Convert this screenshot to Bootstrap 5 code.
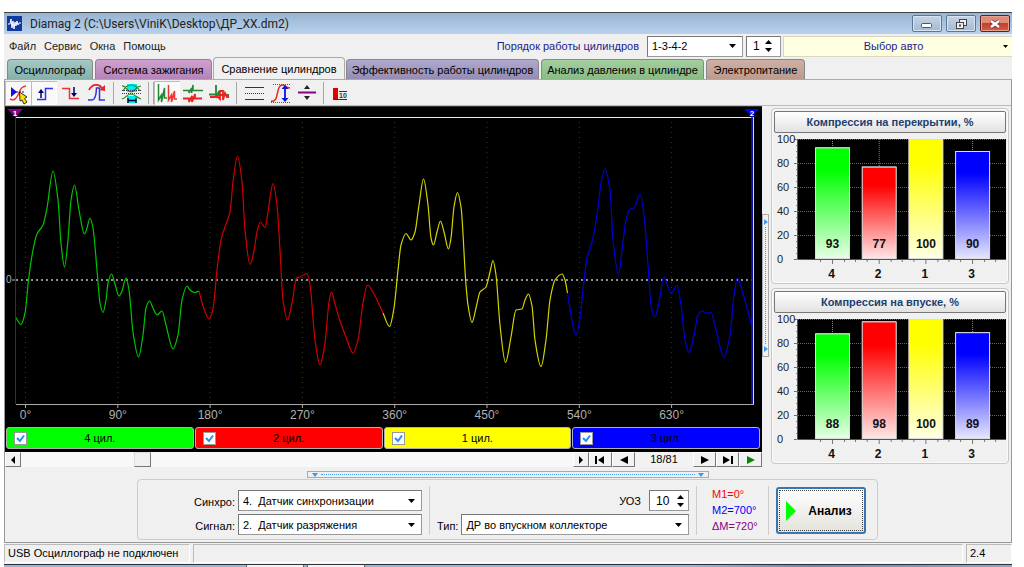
<!DOCTYPE html>
<html lang="ru">
<head>
<meta charset="utf-8">
<meta name="viewport" content="width=device-width, initial-scale=1">
<title>Diamag 2</title>
<link href="https://cdn.jsdelivr.net/npm/bootstrap@5.3.0/dist/css/bootstrap.min.css" rel="stylesheet">
<style>
body{font:11px/14px "Liberation Sans",Arial,sans-serif;color:#000;background:#fff;padding:12px 12px 0 4px}
button,input,select{font:inherit;color:inherit}
.app{background:#f0f0f0}
.titlebar{height:22px;border-top:1px solid #444;background:linear-gradient(#98b4d2,#b9d1ec);font:12px/20px Roboto,sans-serif;color:#222;padding:0 2px 0 3px}
.winbtn{width:30px;height:17px;border:1px solid #5d7893;border-radius:2px;background:linear-gradient(#c3d4e8,#a2bad5);box-shadow:inset 0 0 0 1px #d8e4f2;padding:0}
.winbtn.close-x{background:linear-gradient(#e08a78 45%,#c2402a 50%,#d0604a);border-color:#5b2222;box-shadow:inset 0 0 0 1px #e8a090}
.menurow{height:23px;padding:1px 0 0 5px}
.menurow nav{gap:8px}
.menurow nav a{color:#222;text-decoration:none}
.field{background:#fff;border:1px solid #999;border-top-color:#777;border-left-color:#777;height:21px;border-radius:0}
.drop{appearance:none;padding:0 24px 0 4px;background:#fff url("data:image/svg+xml,%3Csvg xmlns='http://www.w3.org/2000/svg' width='7' height='4'%3E%3Cpath d='M0 0H7L3.500 4Z'/%3E%3C/svg%3E") no-repeat right 6px center}
.spin{width:35px;font-size:12px}
.spin input{border:0;background:transparent;width:20px;min-width:0;padding:0 0 0 6px;outline:0}
.spin button{border:0;background:none;padding:0;line-height:0;display:block}
.order-label{color:#1c1c8c}
.order-select{width:96px;margin-right:3px}
.car{width:229px;height:21px;margin-left:2px;border:1px solid #d8d8c0;border-right:0;background:#ffffe1;color:#1c1c8c;padding:0 4px 0 0}
.tabs{gap:2px;padding-left:3px;height:22px;line-height:18px}
.tabs button{height:20px;border:1px solid #888;border-bottom:0;border-radius:4px 4px 0 0;padding:0;white-space:nowrap}
.tabs .t1{background:linear-gradient(#a5c9c5,#86b0ab);flex:0 0 86px}
.tabs .t2{background:linear-gradient(#cfa0d0,#b384b5);flex:0 0 117px}
.tabs .t3{background:#f0f0f0;flex:0 0 132px;height:22px;line-height:20px;margin:0 -1px;border-color:#aaa}
.tabs .t4{background:linear-gradient(#b0a8ce,#958cb4);flex:0 0 193px}
.tabs .t5{background:linear-gradient(#a4cf9f,#8aba85);flex:0 0 163px}
.tabs .t6{background:linear-gradient(#d0b0a4,#bb9b8e);flex:0 0 99px}
.page{border:1px solid #999;border-top-color:#aaa}
.tools{height:26px;border-bottom:1px solid #bbb}
.tools button{width:26px;height:24px;padding:0;border:0;background:none;line-height:0}
.tools button.on{background:#f9f9f9;box-shadow:inset 1px 1px #bbb,inset -1px -1px #fff}
.tools .sepv{width:1px;height:22px;background:#a8a8a8;margin:0 4px}
.tools svg,.scope svg,.bars svg{display:block}
.scope{background:#000;border-top:1px solid #333}
.legendrow{gap:1px;padding:2px 2px 3px 1px}
.legendrow label{flex:1 1 0;height:22px;border:1px solid #b0b0b0;border-radius:3px;padding-left:7px}
.legendrow input{appearance:none;width:13px;height:13px;margin:0;border:1px solid #999;background:#fff url("data:image/svg+xml,%3Csvg xmlns='http://www.w3.org/2000/svg' viewBox='0 0 11 11'%3E%3Cpath d='M2 5L5 8L9 2.500' fill='none' stroke='%232a8cf0' stroke-width='2'/%3E%3C/svg%3E")}
.legendrow span{flex:1;text-align:center;padding-right:20px}
.scroller{height:15px;background:#f8f8f8}
.scroller button{width:23px;height:15px;padding:0;line-height:0;background:#f2f2f2;border:1px solid #fff;border-right-color:#777;border-bottom-color:#777}
.scroller button.arrow{width:16px}
.scroller input{appearance:none;background:transparent;height:15px;margin:0;min-width:0}
.scroller input::-webkit-slider-thumb{appearance:none;width:17px;height:15px;background:#f0f0f0;border:1px solid #ddd;border-right-color:#777;border-bottom-color:#777}
.scroller output{width:58px;background:#f2f2f2;text-align:center}
.split-v{width:7px;height:143px;border:1px solid #aaa;margin-top:108px;padding:4px 0}
.split-v i{width:1px;border-left:1px dotted #3d98f5;flex:1;margin:2px 0}
.split-h{width:402px;height:7px;border:1px solid #aaa;margin:4px auto 0;padding:0 4px}
.split-h i{border-top:1px dotted #3d98f5;height:1px;flex:1;margin:0 3px}
.side{width:242px;padding:2px 2px 0 2px;gap:4px}
.bars{border:1px solid #c8c8c8;border-radius:4px;box-shadow:inset 0 0 0 1px #fafafa;padding:2px 2px 0}
.bars button{height:22px;border:1px solid #777;border-radius:2px;background:linear-gradient(#fff,#e2e2e2);color:#1b3f70;font-weight:700;padding:0}
.params{width:741px;border:1px solid #ccc;border-radius:4px;margin:1px 0 2px 132px;padding:6px 10px 4px 0}
.params .lines{gap:3px;padding-top:4px}
.params .rule{width:1px;background:#ccc;margin:0 7px}
.col-a{width:284px}.col-a select{width:184px}
.col-b select{width:231px}
.col-b{width:252px}
.col-b .spin{width:40px}
.lead-label{padding-right:3px;padding-top:5px;white-space:nowrap}
.marks{width:57px;padding-left:8px;line-height:16px}
.run{width:90px;height:47px;margin-top:1px;border:2px solid #3a76ae;border-radius:3px;background:linear-gradient(#fff,#e4e2dc);outline:1px dotted #444;outline-offset:-4px;font-weight:700;font-size:12px;padding:0 0 0 8px}
.status{height:20px;margin-top:1px;line-height:16px;gap:3px}
.status span{border:1px solid #bbb;border-right-color:#fff;border-bottom-color:#fff;height:19px;padding-left:3px;white-space:nowrap}
.task{height:4px;border-top:1px solid #333;background:linear-gradient(90deg,#9ab6d6 0 68%,#7088aa 80%,#8fa8c8);padding-left:242px;gap:3px}
.task i{width:58px;height:3px;background:#f0f4fa;border:1px solid #666;border-width:0 1px}
.c4{background:#0f0}.c2{background:red}.c1{background:#ff0}.c3{background:#00f}
</style>
</head>
<body>
<div class="app">
<header class="titlebar d-flex align-items-center">
<svg width="15" height="15" viewBox="0 0 15 15"><rect width="15" height="15" fill="#123a9c"/><path d="M1 8H3L4 3L5 12L6 5L7 13L8 6L9 10L10 5L11 9L12 7H14" fill="none" stroke="#fff"/></svg>
<span class="ms-2 flex-grow-1">Diamag 2 (C:\Users\ViniK\Desktop\ДР_XX.dm2)</span>
<div class="d-flex gap-1">
<button class="winbtn" aria-label="Свернуть"><svg width="12" height="5" class="d-block mx-auto mt-1"><rect x=".5" y=".5" width="10" height="4" rx="1" fill="#fff" stroke="#555"/></svg></button>
<button class="winbtn" aria-label="Восстановить"><svg width="13" height="12" class="d-block mx-auto"><g fill="#eee" stroke="#444"><rect x="4.500" y="1.500" width="7" height="6"/><rect x="1.500" y="4.500" width="7" height="6"/></g><rect x="4" y="6.500" width="2" height="2" fill="#444"/></svg></button>
<button class="winbtn close-x" aria-label="Закрыть"><svg width="12" height="10" class="d-block mx-auto"><path d="M2 2L10 8M10 2L2 8" stroke="#633" stroke-width="4"/><path d="M2 2L10 8M10 2L2 8" stroke="#fff" stroke-width="2.500"/></svg></button>
</div>
</header>
<div class="menurow d-flex align-items-center">
<nav class="d-flex flex-grow-1"><a href="#">Файл</a><a href="#">Сервис</a><a href="#">Окна</a><a href="#">Помощь</a></nav>
<label class="order-label me-2" for="order">Порядок работы цилиндров</label>
<select id="order" class="field drop order-select"><option>1-3-4-2</option></select>
<div class="field spin d-flex align-items-center"><input class="flex-grow-1" value="1" aria-label="Цилиндр"><div class="me-2"><button class="mb-1" aria-label="Больше"><svg width="7" height="4"><path d="M0 4H7L3.500 0Z"/></svg></button><button aria-label="Меньше"><svg width="7" height="4"><path d="M0 0H7L3.500 4Z"/></svg></button></div></div>
<button class="car d-flex align-items-center"><span class="flex-grow-1">Выбор авто</span><svg width="5" height="3"><path d="M0 0H5L2.500 3Z"/></svg></button>
</div>
<div class="tabs d-flex align-items-end" role="tablist">
<button class="t1" role="tab">Осциллограф</button><button class="t2" role="tab">Система зажигания</button><button class="t3" role="tab" aria-selected="true">Сравнение цилиндров</button><button class="t4" role="tab">Эффективность работы цилиндров</button><button class="t5" role="tab">Анализ давления в цилиндре</button><button class="t6" role="tab">Электропитание</button>
</div>
<main class="page">
<div class="tools d-flex align-items-center">
<button class="on" aria-label="Курсор"><svg width="26" height="24" viewBox="5 80 26 24" fill="none"><path d="M10 98C14 100 16 98 18 94S20 86 26 85" stroke="#e33" stroke-width="1.500"/><path d="M11 86V96L17 91Z" fill="#11d"/><path d="M16 91H25" stroke="#11d" stroke-dasharray="2 1"/><path d="M19.500 91L27 96L24.500 97.500L27 101L24 103L22 99L20 100Z" fill="#fd0" stroke="#332"/></svg></button>
<button class="on" aria-label="Фронт"><svg width="26" height="24" viewBox="31 80 26 24" fill="none"><path d="M37 98.500H45.500V87.500H53" stroke="#33e" stroke-width="1.500"/><path d="M41 97V90" stroke="#006" stroke-width="1.500"/><path d="M38 92L41 88L44 92Z" fill="#006"/></svg></button>
<button aria-label="Спад"><svg width="26" height="24" viewBox="57 80 26 24" fill="none"><path d="M62 87.500H69.500V97.500H79" stroke="#e33" stroke-width="1.500"/><path d="M74 86V93" stroke="#006" stroke-width="1.500"/><path d="M71 92L74 96L77 92Z" fill="#006"/></svg></button>
<button aria-label="Сброс"><svg width="26" height="24" viewBox="84 80 26 24" fill="none"><path d="M89 99H93Q97 99 97.500 87H100.500V99H106" stroke="#33e" stroke-width="1.500"/><path d="M90 89C93 83 100 82 103 87" stroke="#e22" stroke-width="1.800"/><path d="M100 89L106 84V90Z" fill="#e22"/></svg></button>
<span class="sepv"></span>
<button aria-label="Интервал"><svg width="26" height="24" viewBox="119 80 26 24" fill="none"><path d="M128 83H138V91H128ZM128 95H138V102H128Z" fill="#0ee"/><path d="M123 85C127 84 128 91 132 91C136 91 137 85 142 85M123 98C127 97 128 93 132 93C136 93 138 97 142 98M124 90C128 82 136 82 141 90" stroke="#282" stroke-width="1.200"/><path d="M123 89.500H142M123 92.500H142" stroke="#335" stroke-dasharray="1 1"/><path d="M129 97V102M137 97V102M129 99.500H137" stroke="#003" stroke-width="1.300"/></svg></button>
<span class="sepv me-0"></span><span class="sepv ms-1 me-0"></span>
<button class="on" aria-label="Рядом"><svg width="26" height="24" viewBox="154 80 26 24" fill="none"><path d="M158.500 83V99L161.500 94V101L164.500 87V97H167" stroke="#283" stroke-width="1.500"/><path d="M168.500 84V99L171.500 94V101L174.500 90V98H177" stroke="#e33" stroke-width="1.500"/></svg></button>
<button aria-label="Друг под другом"><svg width="26" height="24" viewBox="180 80 26 24" fill="none"><path d="M183 89.500H189V92L191.500 87V92L193 84V89.500H203" stroke="#283" stroke-width="1.500"/><path d="M183 97.500H189V101L192 95V101L195 93V97.500H202" stroke="#e22" stroke-width="1.800"/></svg></button>
<button aria-label="Наложение"><svg width="26" height="24" viewBox="206 80 26 24" fill="none"><path d="M209 93.500H216V84V97L219 90V94H229" stroke="#283" stroke-width="1.800"/><path d="M210 96H218L220 98V90H223V99L225 92L227 96H229" stroke="#e22" stroke-width="1.800"/></svg></button>
<span class="sepv"></span>
<button aria-label="Сетка"><svg width="26" height="24" viewBox="241 80 26 24"><path d="M245 86.500H264M245 98.500H264" stroke="#333"/><path d="M245 92.500H264" stroke="#333" stroke-dasharray="1 1"/></svg></button>
<button aria-label="Амплитуда"><svg width="26" height="24" viewBox="267 80 26 24" fill="none"><path d="M273 83.500H290M271 101.500H290" stroke="#555" stroke-dasharray="1 1"/><path d="M271 100C280 102 275 85 282 84C285 83 285 87 290 87" stroke="#e22" stroke-width="1.500"/><path d="M285 87V98" stroke="#11d" stroke-width="1.800"/><path d="M281.500 88L285 84L288.500 88ZM281.500 97L285 101L288.500 97Z" fill="#11d"/></svg></button>
<button aria-label="По вертикали"><svg width="26" height="24" viewBox="293 80 26 24"><path d="M298 91.500H316" stroke="#808" stroke-width="2"/><path d="M304 88L307 84L310 88ZM304 95L307 99L310 95Z" fill="#222"/></svg></button>
<span class="sepv"></span>
<button aria-label="Цифры"><svg width="26" height="24" viewBox="329 80 26 24"><path d="M334 87H339V99H334Z" fill="#e00000"/><text x="340" y="97" font-size="7" font-weight="700" fill="#333">10</text><path d="M335 98.500H348M340 90.500H348" stroke="#333"/></svg></button>
</div>
<div class="d-flex">
<section class="flex-grow-1" style="min-width:0">
<div class="scope">
<svg id="wave" viewBox="5 107 757 318" width="100%" fill="none"></svg>
<div class="legendrow d-flex">
<label class="c4 d-flex align-items-center"><input type="checkbox" checked><span>4 цил.</span></label>
<label class="c2 d-flex align-items-center"><input type="checkbox" checked><span>2 цил.</span></label>
<label class="c1 d-flex align-items-center"><input type="checkbox" checked><span>1 цил.</span></label>
<label class="c3 d-flex align-items-center"><input type="checkbox" checked><span>3 цил.</span></label>
</div>
</div>
<div class="scroller d-flex">
<button class="arrow" aria-label="Влево"><svg width="5" height="8"><path d="M4 0V8L0 4Z"/></svg></button>
<input class="flex-grow-1" type="range" min="0" max="1000" value="211" aria-label="Прокрутка">
<button class="arrow" aria-label="Вправо"><svg width="5" height="8"><path d="M0 0V8L4 4Z"/></svg></button>
<button aria-label="Первый"><svg width="11" height="8"><path d="M0 0H2V8H0ZM9 0V8L3 4Z"/></svg></button>
<button aria-label="Назад"><svg width="8" height="8"><path d="M8 0V8L0 4Z"/></svg></button>
<output>18/81</output>
<button aria-label="Вперёд"><svg width="8" height="8"><path d="M0 0V8L8 4Z"/></svg></button>
<button aria-label="Последний"><svg width="11" height="8"><path d="M9 0H11V8H9ZM1 0V8L8 4Z"/></svg></button>
<button aria-label="Пуск"><svg width="8" height="8"><path d="M0 0V8L8 4Z" fill="#080"/></svg></button>
</div>
</section>
<div class="split-v d-flex flex-column align-items-center"><svg width="4" height="6"><path d="M0 0V6L4 3Z" fill="#3d98f5"/></svg><i></i><svg width="4" height="6"><path d="M0 0V6L4 3Z" fill="#3d98f5"/></svg></div>
<aside class="side d-flex flex-column">
<section class="bars"><button class="w-100">Компрессия на перекрытии, %</button><svg data-values="93,77,100,90" viewBox="773 134 232 150" width="100%"></svg></section>
<section class="bars"><button class="w-100">Компрессия на впуске, %</button><svg data-values="88,98,100,89" viewBox="773 134 232 150" width="100%"></svg></section>
</aside>
</div>
<div class="split-h d-flex align-items-center"><svg width="6" height="4"><path d="M0 0H6L3 4Z" fill="#3d98f5"/></svg><i></i><svg width="6" height="4"><path d="M0 0H6L3 4Z" fill="#3d98f5"/></svg></div>
<form class="params d-flex align-items-start">
<div class="lines col-a d-flex flex-column">
<div class="d-flex justify-content-end"><label class="lead-label" for="sync">Синхро:</label><select id="sync" class="field drop"><option>4.&nbsp; Датчик синхронизации</option></select></div>
<div class="d-flex justify-content-end"><label class="lead-label" for="sig">Сигнал:</label><select id="sig" class="field drop"><option>2.&nbsp; Датчик разряжения</option></select></div>
</div>
<div class="rule align-self-stretch"></div>
<div class="lines col-b d-flex flex-column">
<div class="d-flex justify-content-end align-items-center"><label class="me-2" for="uoz">УОЗ</label>
<div class="field spin d-flex align-items-center"><input id="uoz" class="flex-grow-1" value="10"><div class="me-1"><button type="button" class="mb-1" aria-label="Больше"><svg width="7" height="4"><path d="M0 4H7L3.500 0Z"/></svg></button><button type="button" aria-label="Меньше"><svg width="7" height="4"><path d="M0 0H7L3.500 4Z"/></svg></button></div></div></div>
<div class="d-flex justify-content-end"><label class="lead-label" for="type">Тип:</label><select id="type" class="field drop"><option>ДР во впускном коллекторе</option></select></div>
</div>
<div class="rule align-self-stretch"></div>
<div class="marks"><div style="color:red">M1=0°</div><div style="color:#00f">M2=700°</div><div style="color:#808">ΔM=720°</div></div>
<div class="rule align-self-stretch"></div>
<button type="button" class="run d-flex align-items-center"><svg width="10" height="20"><path d="M0 0L10 10L0 20Z" fill="#0f0"/></svg><span class="flex-grow-1">Анализ</span></button>
</form>
</main>
<footer class="status d-flex"><span style="width:186px">USB Осциллограф не подключен</span><span class="flex-grow-1"></span><span style="width:46px">2.4</span></footer>
<div class="task d-flex"><i></i><i></i></div>
</div>
<script src="https://cdn.jsdelivr.net/npm/bootstrap@5.3.0/dist/js/bootstrap.bundle.min.js"></script>
<script>
// Monotone cubic interpolation keeps every peak flat at its sample.
function smooth(p){
  const n=p.length,s=[],m=[];
  for(let i=0;i<n-1;i++)s.push((p[i+1][1]-p[i][1])/(p[i+1][0]-p[i][0]));
  for(let i=0;i<n;i++)m.push(i===0?s[0]:i===n-1?s[n-2]:s[i-1]*s[i]<=0?0:2*s[i-1]*s[i]/(s[i-1]+s[i]));
  let d='M'+p[0];
  for(let i=0;i<n-1;i++){const h=(p[i+1][0]-p[i][0])/3;
    d+='C'+[p[i][0]+h,p[i][1]+m[i]*h,p[i+1][0]-h,p[i+1][1]-m[i+1]*h,p[i+1][0],p[i+1][1]].map(v=>v.toFixed(1));}
  return d;
}
const waves={
'#00c400':'15.5,317 21,324.5 25,313 28.5,280 33,250 37,234 43,225 47,208 53,171 58,200 61,243 64.5,267 68,240 71,200 74.5,185 79,210 84.5,234 87,228 90,218 93,228 97,270 100,303 103,312.5 106,300 108,283 111.5,274 115,284 119,296 122,291 126,278 129,290 133,332 138.5,357 143,335 146,308 149.5,301 153,308 157,315 162,311 166,325 173,349 178,335 182,300 187,286 190,290 194.5,292.5 199,291',
'#d00000':'199,291 203,306 209,319 213,309 217,270 221,240 225,227 230,212 233,182 237.5,156 242,182 245,230 250,264.5 254,251 257,232 260.5,222 265,227.5 268,212 273,183.5 277,205 280,250 283,300 287.5,320 292,303 296.5,278 300,277 307,273.5 310,285 315,340 320,365 325,343 329,302 331.5,292 335,304 340,321 346,337 353,353 358,340 363,303 367.5,285 374,294 383,313',
'#d4d400':'383,313 389.5,326.5 394,308 398,270 401,245 406,233.5 411,240 415,232 419,205 423.5,179 428,205 431,238 433.5,245 437,232 440.5,221 444,232 448.5,249 451,238 454,207 457.5,192.5 461,207 466,285 468,305 472,322.5 476,308 480,292 486,287 490,272 493,260.5 496,275 500,325 505.5,362.5 511,337 516,310 522,309 525,300 528.5,294 532,306 535,340 541,366.5 546,340 550,300 555,280 562,274 565,280 567.5,293',
'#0000dc':'567.5,293 571,315 576,335 580,318 583,290 587,258 592,242 597,215 601,183 605,169 610,190 613,240 618.5,274.5 622,250 626,220 630,209 634,208 640,194 644,215 648,265 651,305 654.5,317.5 659,303 664,276.5 667,284 671,293.5 677,285.5 681,305 685,340 689,352.5 694,335 698,315 702,311 707,313 711,312.5 716,330 724,357 730,335 734,295 737.5,278 742,290 747,308 751.5,324.5'};
let w='';
for(let i=0;i<8;i++){const x=25.5+i*92.3;
  w+=`<path d="M${x} 122V403" stroke="#3a3a10" stroke-dasharray="1 4"/><path d="M${x} 404V408" stroke="#aaa"/><text x="${x}" y="419" text-anchor="middle" font-size="12" fill="#b0b0b0">${i*90}°</text>`;}
w+='<path d="M16 280H752" stroke="#c0c0c0" stroke-width="1.500" stroke-dasharray="2 3"/><path d="M16 117.500H754" stroke="#eee"/><path d="M16 404.500H754" stroke="#aaa"/>';
for(const c in waves)w+=`<path d="${smooth(waves[c].split(' ').map(q=>q.split(',').map(Number)))}" stroke="${c}" stroke-width="1.200"/>`;
w+='<path d="M15.500 112V404" stroke="#707"/><path d="M752 112V404" stroke="#11f" stroke-width="1.500"/><path d="M753.500 117V404" stroke="#ddd"/><path d="M7 109H23L15.500 117Z" fill="#808"/><path d="M744 109H759L752 117Z" fill="#00f"/>';
w+='<g font-size="8" font-weight="700" fill="#fff" text-anchor="middle"><text x="15" y="116">1</text><text x="752" y="116">2</text></g><text x="6" y="283" font-size="10" fill="#b0b0b0">0</text><path d="M12 280H15" stroke="#b0b0b0"/>';
document.getElementById('wave').innerHTML=w;

const colors=['#00ff00','#ff0000','#ffff00','#0000ff'],names=[4,2,1,3];
let defs='<defs>'+colors.map((c,i)=>`<linearGradient id="g${i}" x2="0" y2="1"><stop offset=".2" stop-color="${c}"/><stop offset="1" stop-color="${c}" stop-opacity=".1"/></linearGradient>`).join('')+'</defs>';
document.querySelectorAll('svg[data-values]').forEach((el,k)=>{
  let s=(k?'':defs)+'<rect x="797" y="140" width="208" height="120"/>';
  for(let v=0;v<=100;v+=20){const y=260-v*1.2;
    s+=`<path d="M797 ${y+.5}H1005" stroke="#666" stroke-dasharray="1 1"/><path d="M793 ${y+.5}H797" stroke="#666"/><text x="776" y="${y+4}" font-size="11" fill="#222">${v}</text>`;}
  for(let v=0;v<=20;v++)s+=`<path d="M795 ${260.5-v*6}H797" stroke="#888"/>`;
  s+='<path d="M797 260.500H1005M796.500 140V260" stroke="#555"/>';
  el.dataset.values.split(',').forEach((v,i)=>{const x=831.5+i*46.7,h=v*1.2;
    s+=`<path d="M${x} 140V260" stroke="#888" stroke-dasharray="1 1"/><rect x="${x-17}" y="${260-h}" width="34" height="${h}" fill="#fff"/><rect x="${x-17}" y="${260-h+.5}" width="34" height="${h-1}" fill="url(#g${i})" stroke="#ddd"/>`;
    s+=`<path d="M${x-12} 261V263M${x} 261V265M${x+12} 261V263M${x+23} 261V263" stroke="#777"/><g font-size="12" font-weight="700" fill="#111" text-anchor="middle"><text x="${x}" y="249">${v}</text><text x="${x-1}" y="279">${names[i]}</text></g>`;});
  el.innerHTML=s;
});
</script>
</body>
</html>
